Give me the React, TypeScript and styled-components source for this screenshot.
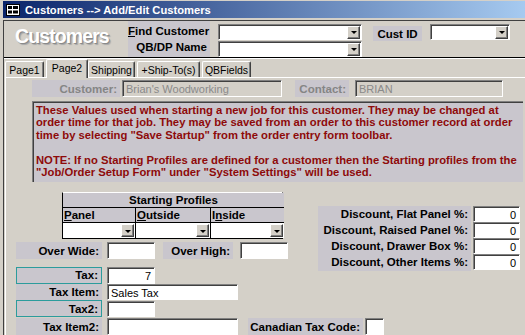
import React from 'react'
import styled, { createGlobalStyle } from 'styled-components'

const GlobalStyle = createGlobalStyle`
  html, body { margin: 0; padding: 0; background: #d4d0c8; }
  body { font-family: "Liberation Sans", Arial, sans-serif; }
  * { box-sizing: border-box; }
`

const FACE = '#d4d0c8'
const LABEL_BG = '#c9c6cd'

const Window = styled.div`
  width: 525px;
  height: 335px;
  overflow: hidden;
  background: ${FACE};
  padding: 1px 0 0 3px;
  display: flex;
  flex-direction: column;
`

const TitleBar = styled.div`
  height: 18px;
  display: flex;
  align-items: center;
  gap: 5px;
  padding-left: 3px;
  background: linear-gradient(90deg, #0a246a 0%, #a6caf0 100%);
  color: #fff;
  font-weight: bold;
  font-size: 11.2px;
  white-space: nowrap;
`

const Frame = styled.div`
  flex: 1;
  margin-top: 2px;
  border-top: 1px solid #404040;
  border-left: 1px solid #404040;
  display: flex;
  flex-direction: column;
`

const Header = styled.div`
  height: 36px;
  display: flex;
  align-items: flex-start;
`

const Logo = styled.div`
  width: 124px;
  padding: 4px 0 0 11px;
  font-size: 19.5px;
  font-weight: bold;
  color: #fff;
  letter-spacing: -0.9px;
  text-shadow: 1px 1px 0 #8a8a8a, 2px 2px 1px #a8a8a8;
`

const FindBox = styled.div`
  width: 82px;
  height: 36px;
  background: ${LABEL_BG};
  display: flex;
  flex-direction: column;
  justify-content: center;
  text-align: right;
  padding-right: 3px;
  font-size: 11.5px;
  font-weight: bold;
  line-height: 16px;
  color: #000;
  white-space: nowrap;
`

const ComboStack = styled.div<{ $ml?: number }>`
  margin: 3px 0 0 ${p => p.$ml ?? 8}px;
  display: flex;
  flex-direction: column;
  gap: 1px;
`

const Field = styled.div<{ $w: number; $h?: number; $align?: string; $disabled?: boolean; $ml?: number }>`
  width: ${p => p.$w}px;
  height: ${p => p.$h ?? 17}px;
  margin-left: ${p => p.$ml ?? 0}px;
  background: ${p => (p.$disabled ? FACE : '#fff')};
  border-top: 1px solid #808080;
  border-left: 1px solid #808080;
  border-right: 1px solid #fff;
  border-bottom: 1px solid #fff;
  box-shadow: inset 1px 1px 0 #404040;
  display: flex;
  align-items: center;
  justify-content: ${p => (p.$align === 'right' ? 'flex-end' : 'flex-start')};
  padding: 1px 3px 0 3px;
  font-size: 11px;
  color: ${p => (p.$disabled ? '#8a8a8a' : '#000')};
  white-space: nowrap;
  overflow: hidden;
  flex-shrink: 0;
`

const ComboBox = styled(Field)`
  justify-content: flex-end;
  padding: 1px 1px 1px 3px;
`

const DropBtn = styled.div`
  width: 13px;
  height: 13px;
  background: ${FACE};
  border-top: 1px solid #fff;
  border-left: 1px solid #fff;
  border-right: 1px solid #404040;
  border-bottom: 1px solid #404040;
  box-shadow: inset -1px -1px 0 #808080;
  display: flex;
  align-items: center;
  justify-content: center;
`

const Arrow = styled.div`
  width: 0;
  height: 0;
  border-left: 3px solid transparent;
  border-right: 3px solid transparent;
  border-top: 3px solid #000;
  margin-top: 1px;
`

const Combo = ({ w, h }: { w: number; h?: number }) => (
  <ComboBox $w={w} $h={h}>
    <DropBtn>
      <Arrow />
    </DropBtn>
  </ComboBox>
)

const SmallLabel = styled.div<{ $w: number; $ml?: number; $mt?: number }>`
  width: ${p => p.$w}px;
  height: 15px;
  margin: ${p => p.$mt ?? 0}px 0 0 ${p => p.$ml ?? 0}px;
  background: ${LABEL_BG};
  font-size: 11.5px;
  font-weight: bold;
  display: flex;
  align-items: center;
  justify-content: center;
  white-space: nowrap;
`

const Divider = styled.div`
  height: 2px;
  border-top: 1px solid #000;
  border-bottom: 1px solid #fff;
`

const TabStrip = styled.div`
  height: 18px;
  display: flex;
  align-items: flex-end;
  padding-left: 1px;
`

const Tab = styled.div<{ $w: number; $active?: boolean }>`
  width: ${p => p.$w}px;
  height: ${p => (p.$active ? 19 : 16)}px;
  margin-right: ${p => (p.$active ? 0 : 2)}px;
  margin-bottom: ${p => (p.$active ? -1 : 0)}px;
  position: relative;
  z-index: ${p => (p.$active ? 1 : 0)};
  background: ${FACE};
  border-top: 1px solid #fff;
  border-left: 1px solid #fff;
  border-right: 1px solid #404040;
  box-shadow: inset -1px 0 0 #808080;
  border-radius: 2px 2px 0 0;
  font-size: 10.5px;
  display: flex;
  align-items: ${p => (p.$active ? 'flex-start' : 'center')};
  padding-top: ${p => (p.$active ? 2 : 0)}px;
  justify-content: center;
  white-space: nowrap;
`

const TabPage = styled.div`
  flex: 1;
  margin-left: 1px;
  border-top: 1px solid #fff;
  border-left: 1px solid #fff;
  display: flex;
  flex-direction: column;
`

const Row = styled.div<{ $mt?: number; $ml?: number; $h?: number }>`
  display: flex;
  align-items: center;
  height: ${p => p.$h ?? 17}px;
  margin: ${p => p.$mt ?? 0}px 0 0 ${p => p.$ml ?? 0}px;
`

const Label = styled.div<{ $w: number; $ml?: number; $muted?: boolean; $teal?: boolean; $h?: number }>`
  width: ${p => p.$w}px;
  height: ${p => p.$h ?? 17}px;
  margin-left: ${p => p.$ml ?? 0}px;
  background: ${LABEL_BG};
  border: ${p => (p.$teal ? '1px solid #2c9c9c' : 'none')};
  color: ${p => (p.$muted ? '#858585' : '#000')};
  font-size: 11.5px;
  font-weight: bold;
  display: flex;
  align-items: center;
  justify-content: flex-end;
  padding-right: 3px;
  white-space: nowrap;
  flex-shrink: 0;
`

const Note = styled.div`
  margin: 4px 2px 0 26px;
  height: 81px;
  background: ${LABEL_BG};
  border-top: 1px solid #808080;
  border-left: 1px solid #808080;
  box-shadow: inset 1px 1px 0 #404040;
  padding: 2px 0 0 3px;
  color: #8e0a0a;
  font-size: 11.25px;
  font-weight: bold;
  line-height: 12.4px;
  white-space: nowrap;
  overflow: hidden;
`

const Lower = styled.div`
  margin-top: 10px;
  display: grid;
  grid-template-columns: 312px 1fr;
`

const LeftCol = styled.div`
  display: flex;
  flex-direction: column;
`

const Profiles = styled.div`
  margin-left: 56px;
  width: 221px;
  display: grid;
  grid-template-columns: 72px 74px 73px;
  border: 1px solid #000;
  border-top-color: #fff;
  background: #000;
  gap: 0 1px;
`

const ProfHead = styled.div`
  grid-column: 1 / -1;
  height: 15px;
  background: ${LABEL_BG};
  font-size: 11.5px;
  font-weight: bold;
  text-align: center;
  line-height: 15px;
  border-bottom: 1px solid #000;
`

const ProfCol = styled.div`
  height: 15px;
  background: ${LABEL_BG};
  font-size: 11.5px;
  font-weight: bold;
  line-height: 15px;
  padding-left: 1px;
  border-bottom: 1px solid #000;
`

const ProfCombo = styled.div`
  height: 15px;
  background: #fff;
  display: flex;
  justify-content: flex-end;
  align-items: center;
  padding-right: 1px;
`

const Discount = styled.div`
  margin-top: 14px;
  display: flex;
  align-items: flex-start;
`

const DiscLabels = styled.div`
  width: 153px;
  height: 65px;
  background: ${LABEL_BG};
  margin-right: 2px;
  display: flex;
  flex-direction: column;
`

const DiscLabel = styled.div`
  height: 16px;
  font-size: 11.5px;
  font-weight: bold;
  text-align: right;
  padding-right: 3px;
  line-height: 16px;
  white-space: nowrap;
`

const DiscFields = styled.div`
  display: flex;
  flex-direction: column;
`

const BottomRow = styled(Row)`
  grid-column: 1 / -1;
`

const FormIcon = () => (
  <svg width="14" height="12" viewBox="0 0 14 12">
    <rect x="0.5" y="0.5" width="13" height="11" fill="#fff" stroke="#000" />
    <rect x="2" y="2" width="4" height="3" fill="#000" />
    <rect x="7" y="2" width="5" height="3" fill="#000" />
    <rect x="2" y="6.5" width="4" height="3" fill="#000" />
    <rect x="7" y="6.5" width="5" height="3" fill="#000" />
  </svg>
)

const noteLines = [
  'These Values used when starting a new job for this customer. They may be changed at',
  'order time for that job. They may be saved from an order to this customer record at order',
  'time by selecting "Save Startup" from the order entry form toolbar.',
  '\u00a0',
  'NOTE: If no Starting Profiles are defined for a customer then the Starting profiles from the',
  '"Job/Order Setup Form" under "System Settings" will be used.',
]

const discounts = [
  'Discount, Flat Panel %:',
  'Discount, Raised Panel %:',
  'Discount, Drawer Box %:',
  'Discount, Other Items %:',
]

export default function App() {
  return (
    <Window>
      <GlobalStyle />
      <TitleBar>
        <FormIcon />
        Customers --&gt; Add/Edit Customers
      </TitleBar>
      <Frame>
        <Header>
          <Logo>Customers</Logo>
          <FindBox>
            <div><u>F</u>ind Customer</div>
            <div>QB/DP Name</div>
          </FindBox>
          <ComboStack>
            <Combo w={144} h={16} />
            <Combo w={144} h={16} />
          </ComboStack>
          <SmallLabel $w={49} $ml={11} $mt={5}>Cust ID</SmallLabel>
          <ComboStack $ml={8}>
            <Combo w={80} h={16} />
          </ComboStack>
        </Header>
        <Divider />
        <TabStrip>
          <Tab $w={39}>Page1</Tab>
          <Tab $w={42} $active>Page2</Tab>
          <Tab $w={47}>Shipping</Tab>
          <Tab $w={63}>+Ship-To(s)</Tab>
          <Tab $w={49}>QBFields</Tab>
        </TabStrip>
        <TabPage>
          <Row $mt={2} $ml={26}>
            <Label $w={88} $muted>Customer:</Label>
            <Field $w={160} $disabled $ml={2}>Brian's Woodworking</Field>
            <Label $w={54} $ml={13} $muted>Contact:</Label>
            <Field $w={148} $disabled $ml={6}>BRIAN</Field>
          </Row>
          <Note>
            {noteLines.map((l, i) => (
              <div key={i}>{l}</div>
            ))}
          </Note>
          <Lower>
            <LeftCol>
              <Profiles>
                <ProfHead>Starting Profiles</ProfHead>
                <ProfCol><u>P</u>anel</ProfCol>
                <ProfCol><u>O</u>utside</ProfCol>
                <ProfCol>I<u>n</u>side</ProfCol>
                {[0, 1, 2].map(i => (
                  <ProfCombo key={i}>
                    <DropBtn><Arrow /></DropBtn>
                  </ProfCombo>
                ))}
              </Profiles>
              <Row $mt={3} $ml={10}>
                <Label $w={86}>Over Wide:</Label>
                <Field $w={48} $ml={5} />
                <Label $w={70} $ml={8}>Over High:</Label>
                <Field $w={48} $ml={7} />
              </Row>
              <Row $mt={7} $ml={10} $h={18}>
                <Label $w={86} $h={17} $teal>Tax:</Label>
                <Field $w={48} $align="right" $ml={5}>7</Field>
              </Row>
              <Row $ml={10} $h={16}>
                <Label $w={86} $h={16}>Tax Item:</Label>
                <Field $w={131} $h={16} $ml={5}>Sales Tax</Field>
              </Row>
              <Row $ml={10} $h={17}>
                <Label $w={86} $h={17} $teal>Tax2:</Label>
                <Field $w={48} $h={16} $ml={5} />
              </Row>
            </LeftCol>
            <Discount>
              <DiscLabels>
                {discounts.map(d => (
                  <DiscLabel key={d}>{d}</DiscLabel>
                ))}
              </DiscLabels>
              <DiscFields>
                {discounts.map(d => (
                  <Field key={d} $w={47} $h={16} $align="right">0</Field>
                ))}
              </DiscFields>
            </Discount>
            <BottomRow $ml={10} $mt={1}>
              <Label $w={86}>Tax Item2:</Label>
              <Field $w={131} $ml={5} />
              <Label $w={115} $ml={10}>Canadian Tax Code:</Label>
              <Field $w={19} $ml={2} />
            </BottomRow>
          </Lower>
        </TabPage>
      </Frame>
    </Window>
  )
}
